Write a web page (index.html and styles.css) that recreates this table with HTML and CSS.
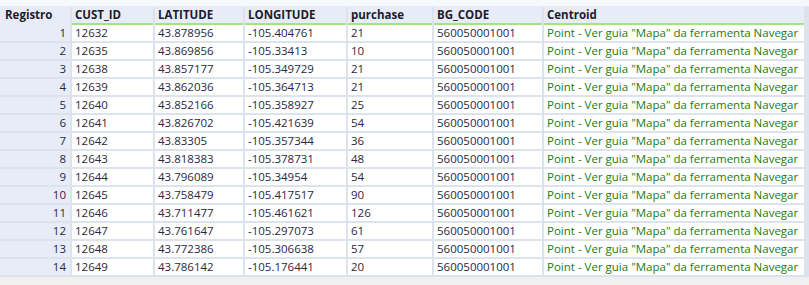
FILE: index.html
```html
<!DOCTYPE html>
<html lang="pt">
<head>
    <meta charset="UTF-8">
    <title>Resultados</title>
    <link rel="stylesheet" href="styles.css">
</head>
<body>
    <div class="toolbar"></div>

    <div class="grid" id="grid">
        <div class="head idx">Registro</div>
        <div class="head">CUST_ID</div>
        <div class="head">LATITUDE</div>
        <div class="head">LONGITUDE</div>
        <div class="head">purchase</div>
        <div class="head">BG_CODE</div>
        <div class="head">Centroid</div>
    </div>

    <div class="footer"><span class="grip"></span></div>

    <script>
        // Sample rows
        const rows = [
            ["12632", "43.878956", "-105.404761", "21"],
            ["12635", "43.869856", "-105.33413", "10"],
            ["12638", "43.857177", "-105.349729", "21"],
            ["12639", "43.862036", "-105.364713", "21"],
            ["12640", "43.852166", "-105.358927", "25"],
            ["12641", "43.826702", "-105.421639", "54"],
            ["12642", "43.83305", "-105.357344", "36"],
            ["12643", "43.818383", "-105.378731", "48"],
            ["12644", "43.796089", "-105.34954", "54"],
            ["12645", "43.758479", "-105.417517", "90"],
            ["12646", "43.711477", "-105.461621", "126"],
            ["12647", "43.761647", "-105.297073", "61"],
            ["12648", "43.772386", "-105.306638", "57"],
            ["12649", "43.786142", "-105.176441", "20"]
        ];

        const grid = document.getElementById('grid');
        grid.insertAdjacentHTML('beforeend', rows.map((r, i) => `
            <div class="cell idx">${i + 1}</div>
            <div class="cell">${r[0]}</div>
            <div class="cell">${r[1]}</div>
            <div class="cell">${r[2]}</div>
            <div class="cell">${r[3]}</div>
            <div class="cell">560050001001</div>
            <div class="cell geo">Point - Ver guia "Mapa" da ferramenta Navegar</div>
        `).join(''));
    </script>
</body>
</html>
```

FILE: styles.css
```css
* {
    margin: 0;
    padding: 0;
    box-sizing: border-box;
}

body {
    background-color: #dde3ed;
    font-family: 'Open Sans', 'Noto Sans', sans-serif;
    font-size: 11.5px;
    width: 809px;
    height: 285px;
    overflow: hidden;
}

.toolbar {
    height: 7px;
    background-color: #f6f8fc;
    border-bottom: 1px solid #e6eaf1;
}

/* Data grid */
.grid {
    display: grid;
    grid-template-columns: 70px 81px 88px 101px 84px 108px 260px;
    grid-auto-rows: 16px;
    column-gap: 2px;
    row-gap: 2px;
}

.head {
    height: 18px;
    background-color: #e8ecf6;
    border-bottom: 2px solid #a2e47e;
    padding: 0 3px;
    font-weight: bold;
    color: #1c1c30;
    line-height: 16px;
    white-space: nowrap;
}

.head.idx {
    border-bottom-color: #e8ecf6;
    padding-left: 5px;
}

.cell {
    background-color: #ffffff;
    padding: 0 3px;
    line-height: 16px;
    color: #2a2840;
    white-space: nowrap;
    overflow: hidden;
}

.cell.idx {
    background-color: #e8ecf6;
    text-align: right;
    padding-right: 4px;
}

.cell.geo {
    color: #257a10;
}

.footer {
    margin-top: 2px;
    height: 10px;
    background-color: #f0f0f0;
    padding-left: 9px;
}

.grip {
    display: inline-block;
    width: 3px;
    height: 2px;
    margin-top: 5px;
    background-color: #c4c4c4;
}
```
